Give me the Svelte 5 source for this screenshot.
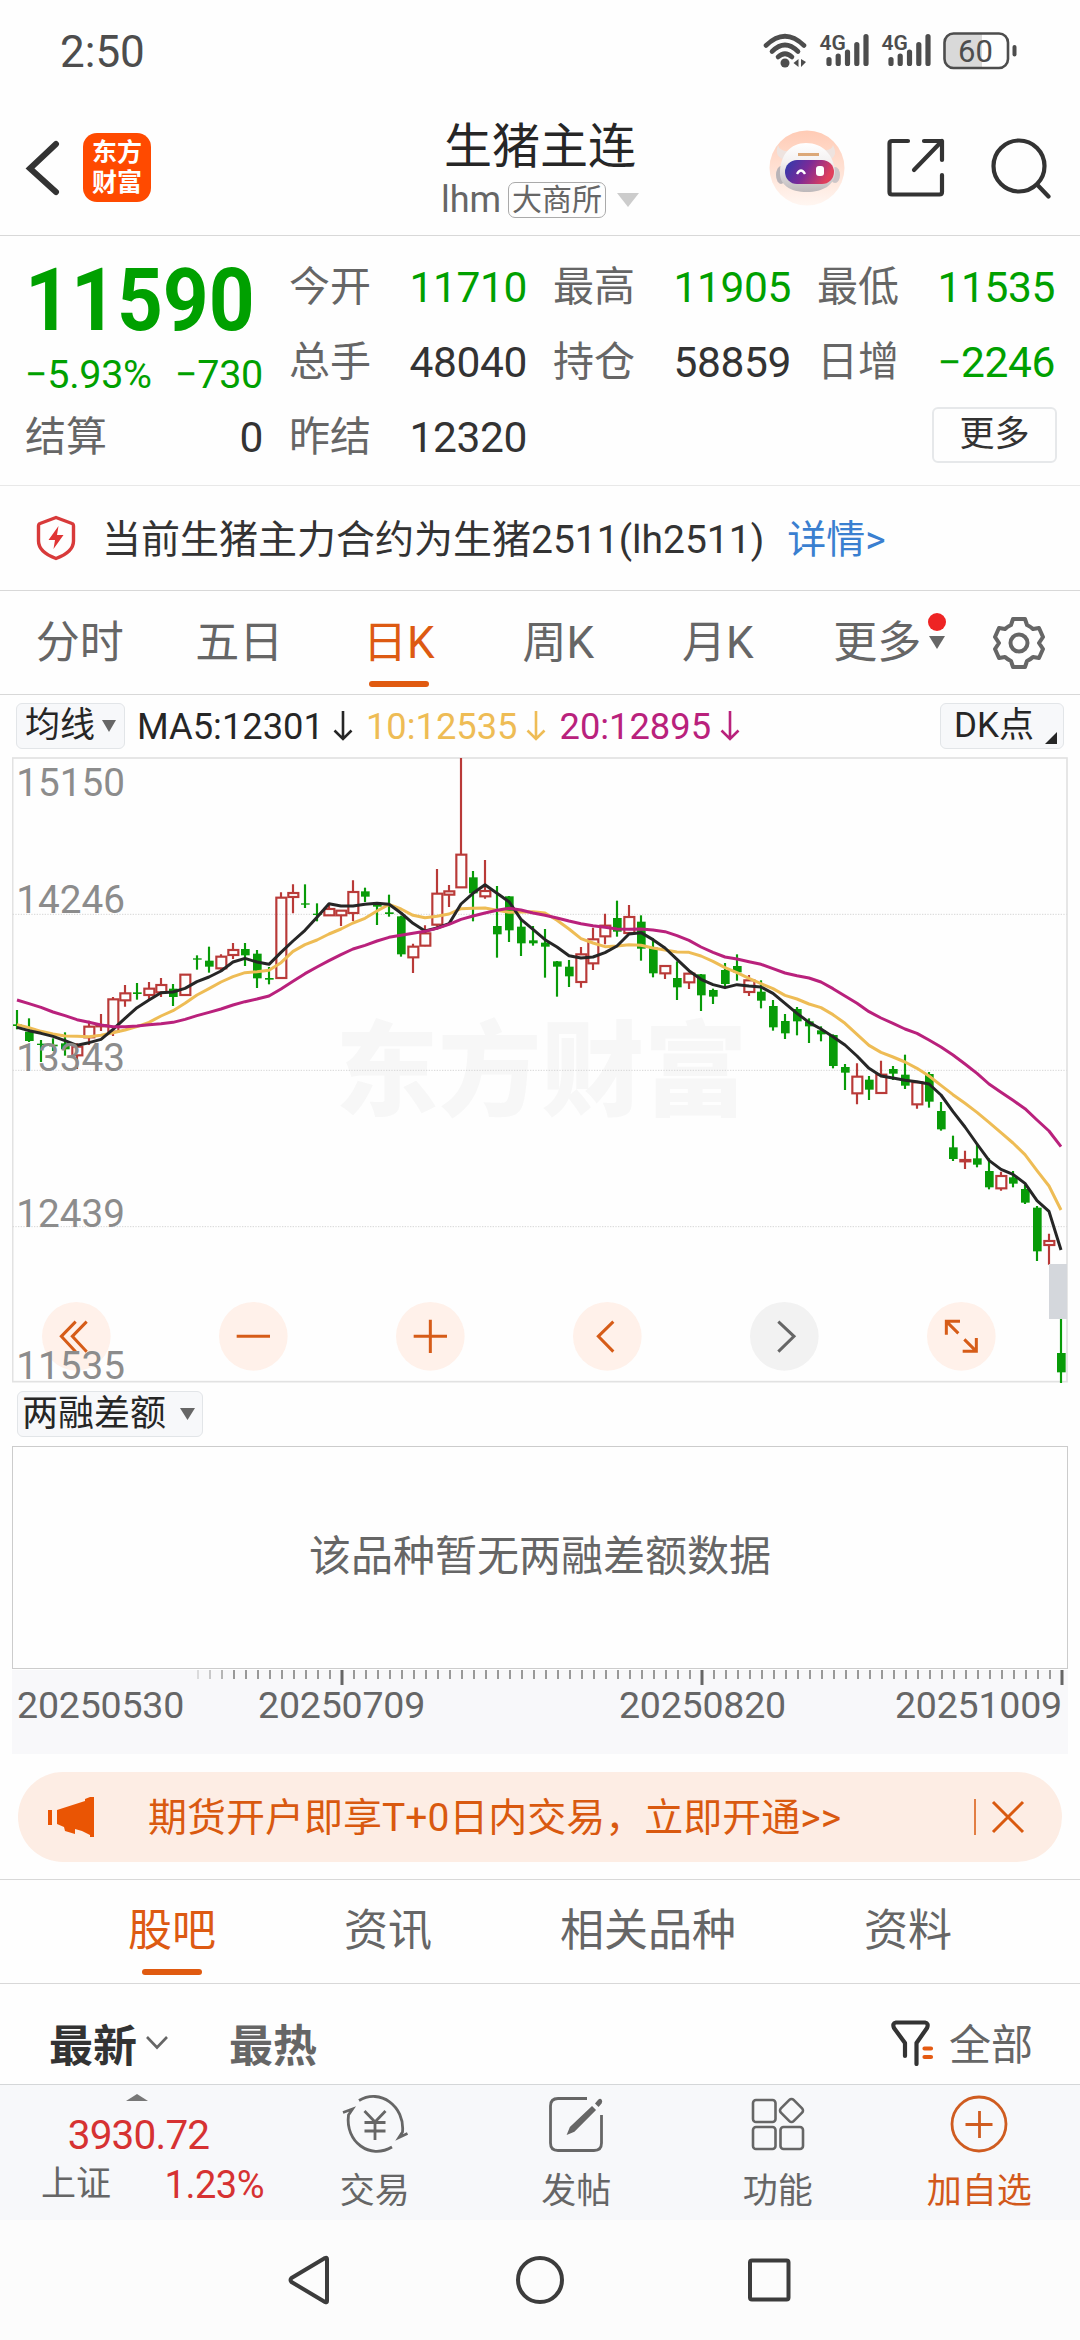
<script lang="ts">
	type Candle = [string, number, number, number, number];

	// chart units: three per css pixel
	const STEP = 36;
	const FIRST_X = 51;

	// direction, high, body top, body bottom, low
	const candles: Candle[] = [
		['d', 780, 823, 828, 838], ['d', 805, 845, 873, 876], ['d', 870, 881, 885, 936], ['d', 865, 884, 889, 903],
		['d', 847, 880, 898, 917], ['u', 880, 890, 916, 957], ['u', 812, 830, 862, 885], ['u', 792, 826, 829, 843],
		['u', 741, 748, 845, 858], ['u', 705, 730, 751, 770], ['d', 699, 727, 732, 749], ['u', 696, 716, 735, 752],
		['u', 684, 705, 727, 741], ['d', 702, 716, 741, 768], ['u', 673, 674, 735, 737], ['d', 616, 625, 629, 659],
		['d', 590, 632, 650, 668], ['u', 613, 620, 655, 660], ['u', 579, 600, 615, 627], ['d', 579, 597, 616, 648],
		['d', 600, 611, 685, 714], ['d', 651, 684, 689, 703], ['u', 427, 443, 684, 686], ['u', 403, 429, 441, 490],
		['d', 403, 460, 464, 474], ['d', 460, 491, 495, 514], ['u', 462, 477, 496, 498], ['u', 480, 482, 496, 528],
		['u', 391, 426, 489, 513], ['d', 413, 424, 440, 456], ['d', 458, 463, 470, 525], ['d', 434, 487, 492, 500],
		['d', 497, 499, 613, 620], ['u', 581, 590, 622, 669], ['u', 526, 550, 587, 589], ['u', 357, 431, 524, 530],
		['u', 405, 424, 434, 471], ['u', 24, 314, 412, 413], ['d', 363, 382, 430, 514], ['u', 330, 423, 439, 446],
		['d', 408, 528, 553, 623], ['d', 438, 439, 541, 576], ['d', 505, 530, 580, 618], ['d', 528, 571, 580, 587],
		['d', 537, 578, 590, 683], ['d', 633, 634, 650, 740], ['d', 630, 650, 679, 711], ['u', 591, 613, 696, 713],
		['u', 533, 568, 640, 660], ['u', 491, 527, 559, 583], ['d', 452, 504, 545, 560], ['u', 465, 501, 549, 551],
		['d', 496, 515, 596, 632], ['d', 565, 592, 670, 682], ['u', 647, 648, 670, 687], ['d', 634, 684, 712, 750],
		['u', 668, 671, 697, 717], ['d', 672, 673, 736, 783], ['d', 716, 720, 740, 762], ['d', 639, 660, 702, 710],
		['d', 613, 648, 667, 692], ['u', 675, 691, 726, 738], ['d', 691, 725, 752, 775], ['d', 750, 768, 832, 842],
		['d', 792, 813, 850, 867], ['d', 771, 777, 814, 856], ['d', 805, 814, 829, 879], ['d', 829, 841, 853, 874],
		['d', 853, 855, 948, 955], ['d', 942, 951, 968, 1020], ['u', 940, 980, 1030, 1063], ['d', 978, 989, 1019, 1050],
		['u', 932, 974, 1029, 1031], ['d', 948, 957, 971, 990], ['d', 914, 974, 1007, 1017], ['u', 994, 997, 1063, 1076],
		['d', 966, 972, 1055, 1073], ['d', 1056, 1083, 1138, 1142], ['d', 1157, 1192, 1227, 1233], ['u', 1202, 1230, 1234, 1257],
		['d', 1180, 1225, 1244, 1252], ['d', 1225, 1263, 1312, 1318], ['u', 1265, 1278, 1315, 1322], ['d', 1263, 1282, 1301, 1312],
		['d', 1305, 1317, 1358, 1362], ['d', 1368, 1373, 1504, 1533], ['u', 1451, 1473, 1485, 1544], ['d', 1707, 1809, 1867, 1899]
	];

	const averages = [
		{
			color: '#eebc55',
			points: [
				824, 833, 844, 852, 858, 859, 860, 856, 848, 840, 830, 817, 798, 782, 760, 735, 716, 696, 680, 668, 665, 661,
				638, 604, 584, 570, 552, 537, 519, 505, 483, 463, 477, 496, 503, 499, 492, 476, 475, 474, 481, 487, 486, 485,
				489, 511, 537, 566, 579, 590, 588, 584, 586, 594, 600, 606, 607, 618, 634, 653, 668, 685, 701, 716, 736, 747,
				762, 773, 794, 820, 853, 886, 907, 921, 936, 955, 978, 1006, 1034, 1060, 1087, 1117, 1148, 1179, 1214, 1262, 1308, 1380
			]
		},
		{
			color: '#262626',
			points: [
				832, 842, 850, 859, 872, 886, 878, 868, 838, 805, 773, 750, 728, 726, 715, 695, 681, 663, 636, 625, 636, 643,
				607, 573, 541, 502, 461, 468, 468, 463, 460, 463, 489, 520, 543, 534, 521, 462, 430, 404, 430, 455, 508, 538,
				569, 591, 617, 624, 621, 608, 588, 552, 548, 569, 594, 628, 662, 688, 704, 713, 704, 708, 711, 730, 760, 790,
				817, 837, 860, 885, 918, 955, 978, 984, 991, 995, 1002, 1035, 1085, 1131, 1182, 1231, 1258, 1273, 1300, 1352, 1384, 1500
			]
		},
		{
			color: '#b9217c',
			points: [
				750, 761, 772, 786, 797, 809, 817, 825, 830, 830, 828, 824, 821, 817, 808, 797, 787, 777, 765, 755, 747, 738,
				717, 694, 671, 651, 632, 614, 597, 586, 573, 562, 556, 550, 544, 535, 523, 508, 498, 489, 481, 475, 480, 489,
				496, 504, 513, 521, 527, 532, 537, 538, 537, 540, 545, 557, 571, 591, 607, 621, 627, 635, 643, 656, 669, 677,
				684, 696, 716, 738, 760, 785, 804, 820, 837, 850, 870, 891, 915, 942, 970, 1002, 1027, 1051, 1076, 1110, 1143, 1190
			]
		}
	];

	const priceLabels = [
		{ text: '15150', y: 137 },
		{ text: '14246', y: 490 },
		{ text: '13343', y: 963 },
		{ text: '12439', y: 1430 },
		{ text: '11535', y: 1887 }
	];

	const controls = [
		'M-2-44L-45 0L-2 46M31-44L-12 0L31 46',
		'M-50 0H50',
		'M-50 0H50M0-50V50',
		'M18-44L-27 0L18 46',
		'M-18-44L29 0L-18 46',
		'M-4-45H-45V-5M-45-45L-9-9M4 45H45V5M45 45L9 9'
	];

	const maLegend = [
		{ text: 'MA5:12301', cls: 'black' },
		{ text: '10:12535', cls: 'yellow' },
		{ text: '20:12895', cls: 'purple' }
	];

	const quotes = [
		{ label: '今开', value: '11710', green: true },
		{ label: '最高', value: '11905', green: true },
		{ label: '最低', value: '11535', green: true },
		{ label: '总手', value: '48040' },
		{ label: '持仓', value: '58859' },
		{ label: '日增', value: '−2246', green: true },
		{ label: '结算', value: '0' },
		{ label: '昨结', value: '12320' }
	];

	const periods = ['分时', '五日', '日K', '周K', '月K'];
	const sections = ['股吧', '资讯', '相关品种', '资料'];
	const ticks = Array.from({ length: 73 }, (_, i) => i);

	let period = $state('日K');
	let section = $state('股吧');

	const x = (i: number) => FIRST_X + i * STEP;

	function linePath(points: number[]): string {
		return points.map((y, i) => `${i ? 'L' : 'M'}${x(i)} ${y}`).join('');
	}
</script>

{#snippet signal(left: number)}
	<text x={left} y="20" class="net">4G</text>
	<path d="M{left + 9.5} 29.5v4M{left + 18.7} 26v7.500M{left + 28} 22v11.500M{left + 37.300} 14.500v19M{left + 46.500} 6.500v27" stroke-width="5.200" stroke-linecap="round" />
{/snippet}

<div class="screen">
	<div class="status">
		<span class="time">2:50</span>
		<svg width="256" height="42" viewBox="0 0 256 42" fill="none" stroke="#4d4d4d">
			<g stroke-width="4.600" stroke-linecap="round">
				<path d="M3 15.500Q22 -3 41 15.500" />
				<path d="M9 21.500Q22 8.500 35 21.500" />
				<path d="M15 27Q22 20.500 29 27" />
			</g>
			<circle cx="22" cy="33" r="4.500" fill="#4d4d4d" stroke="none" />
			<path d="M35.500 29v8l-5-4zM38 29v8l5-5z" fill="#4d4d4d" stroke="none" />
			{@render signal(56.5)}
			{@render signal(118.5)}
			<path d="M191 3.500H219V37.500H191Q181.500 37.500 181.500 29V12Q181.500 3.500 191 3.500Z" fill="#d9d9d9" stroke="none" />
			<rect x="181.500" y="3.500" width="63.500" height="34.500" rx="9" stroke-width="2.600" />
			<path d="M251.500 17v7.500" stroke-width="4" stroke-linecap="round" />
			<text x="212.500" y="32" text-anchor="middle" class="battery">60</text>
		</svg>
	</div>

	<header>
		<div class="side">
			<svg width="36" height="56" viewBox="0 0 36 56" fill="none" stroke="#333" stroke-width="6" stroke-linecap="round">
				<path d="M31 4L5 28.500L31 52" />
			</svg>
			<div class="logo"><span>东方</span><span>财富</span></div>
		</div>
		<div class="title">
			<h1>生猪主连</h1>
			<div class="sub">
				<span>lhm</span>
				<span class="exchange">大商所</span>
				<svg width="22" height="14" viewBox="0 0 22 14"><path d="M0 0H22L11 14Z" fill="#ccc" /></svg>
			</div>
		</div>
		<div class="side right">
			<svg width="76" height="76" viewBox="0 0 76 76">
				<defs>
					<linearGradient id="halo" x1="0" y1="0" x2="0" y2="1">
						<stop offset="0" stop-color="#ffcbb5" />
						<stop offset="1" stop-color="#fff6f1" />
					</linearGradient>
					<linearGradient id="visor" x1="0" y1="0" x2="1" y2="0.300">
						<stop offset="0" stop-color="#2a3cae" />
						<stop offset="0.500" stop-color="#7a2a98" />
						<stop offset="1" stop-color="#e0405c" />
					</linearGradient>
					<linearGradient id="shell" x1="0" y1="0" x2="0" y2="1">
						<stop offset="0" stop-color="#fff" />
						<stop offset="0.400" stop-color="#f3f0f0" />
						<stop offset="1" stop-color="#bdb8ba" />
					</linearGradient>
				</defs>
				<circle cx="38" cy="38" r="37.500" fill="url(#halo)" />
				<path d="M9 15Q5 26 14 29L21 21Q11 22 9 15ZM64 15Q69 25 62 29L54 20Q63 21 64 15Z" fill="#eee3df" />
				<ellipse cx="12" cy="45" rx="5" ry="9" fill="#b9b4b8" />
				<ellipse cx="66" cy="45" rx="5" ry="8" fill="#cdc6c8" />
				<path d="M37 13C54 13 65 25 66 42C66 55 54 62 38 62C21 62 10 55 11 41C12 25 21 13 37 13Z" fill="url(#shell)" />
				<rect x="16" y="30" width="49" height="24" rx="12" fill="url(#visor)" />
				<path d="M29 24.500H50" fill="none" stroke="#dca878" stroke-width="3" />
				<path d="M28 44Q32 37 36 44" fill="none" stroke="#fff" stroke-width="2.400" />
				<rect x="47" y="36" width="8" height="10" rx="3" fill="#fff" />
			</svg>
			<svg width="58" height="60" viewBox="0 0 58 60" fill="none" stroke="#333" stroke-width="4.200" stroke-linecap="round" stroke-linejoin="round">
				<path d="M21 3H5Q2.500 3 2.500 5.500V54Q2.500 56.500 5 56.500H52.500Q55 56.500 55 54V37M37 3H55V22M55 3L27 32" />
			</svg>
			<svg class="search" width="60" height="62" viewBox="0 0 60 62" fill="none" stroke="#333" stroke-width="4.200" stroke-linecap="round">
				<circle cx="28" cy="29" r="25.500" />
				<path d="M46.500 48L57.500 59.500" />
			</svg>
		</div>
	</header>

	<section class="quote">
		<div class="last">
			<div class="price">11590</div>
			<div class="change"><span>−5.93%</span><span>−730</span></div>
		</div>
		{#each quotes as q}
			<div class="cell">
				<span class="label">{q.label}</span>
				<span class="value" class:green={q.green}>{q.value}</span>
			</div>
		{/each}
		<button class="more">更多</button>
	</section>

	<section class="notice">
		<svg width="40" height="46" viewBox="0 0 40 46">
			<path d="M20 2.500L36 8.500Q37.500 9 37.500 11V26Q37.500 37 20 43.500Q2.500 37 2.500 26V11Q2.500 9 4 8.500Z" fill="none" stroke="#d83a3a" stroke-width="3.400" stroke-linejoin="round" />
			<path d="M22.500 11L12.500 25H19L17.500 34L27.500 20H21Z" fill="#e03434" />
		</svg>
		<span>当前生猪主力合约为生猪2511(lh2511)</span>
		<a href="#detail">详情&gt;</a>
	</section>

	<nav class="periods">
		{#each periods as p}
			<button class:active={period === p} onclick={() => (period = p)}>{p}</button>
		{/each}
		<button class="extra">
			更多
			<i class="dot"></i>
			<svg width="16" height="13" viewBox="0 0 16 13"><path d="M0 0H16L8 13Z" fill="#666" /></svg>
		</button>
		<div class="gear">
			<svg width="52" height="54" viewBox="0 0 52 54" fill="none" stroke="#666" stroke-width="4" stroke-linejoin="round">
				<path d="M20 3H32L34 9Q38 11 40 13L46 12L50 21L46 27L50 33L46 42L40 41Q38 43 34 45L32 51H20L18 45Q14 43 12 41L6 42L2 33L6 27L2 21L6 12L12 13Q14 11 18 9Z" />
				<circle cx="26" cy="27" r="8.500" />
			</svg>
		</div>
	</nav>

	<div class="legend">
		<button class="chip">均线<svg width="14" height="12" viewBox="0 0 14 12"><path d="M0 0H14L7 12Z" fill="#666" /></svg></button>
		{#each maLegend as m}
			<span class="ma {m.cls}">
				{m.text}
				<svg width="20" height="30" viewBox="0 0 20 30" fill="none" stroke="currentColor" stroke-width="2.600"><path d="M10 0V28M1.500 19.500L10 28L18.500 19.500" /></svg>
			</span>
		{/each}
		<button class="chip dk">DK点<svg width="12" height="12" viewBox="0 0 12 12"><path d="M12 0V12H0Z" fill="#262626" /></svg></button>
	</div>

	<svg class="chart" width="1056" height="626" viewBox="36 21 3168 1878">
		<text x="1006" y="1073" class="watermark">东方财富</text>
		<rect x="38" y="24" width="3163" height="1871" fill="none" stroke="#e2e2e2" stroke-width="5" />
		{#each [493, 961, 1430] as y}
			<path d="M38 {y}H3200" stroke="#d6d6d6" stroke-width="3" stroke-dasharray="4 4" />
		{/each}
		{#each candles as [dir, high, top, bottom, low], i}
			{#if dir === 'u'}
				<path d="M{x(i)} {high}V{top}M{x(i)} {bottom}V{low}" stroke="#b93a38" stroke-width="6.500" />
				<rect x={x(i) - 14} y={top} width="30" height={bottom - top} fill="none" stroke="#b93a38" stroke-width="6.500" />
			{:else}
				<path d="M{x(i)} {high}V{low}" stroke="#089b08" stroke-width="6.500" />
				<rect x={x(i) - 12} y={top} width="26" height={bottom - top} fill="#089b08" />
			{/if}
		{/each}
		{#each averages as line}
			<path d={linePath(line.points)} fill="none" stroke={line.color} stroke-width="9" stroke-linejoin="round" />
		{/each}
		<rect x="3147" y="1542" width="54" height="165" fill="#d4d7dc" />
		{#each controls as d, i}
			<g transform="translate({229 + i * 531} 1759)">
				<circle r="103" fill={i === 4 ? '#f2f2f2' : '#fff1ea'} />
				<path {d} fill="none" stroke={i === 4 ? '#666' : '#d65c18'} stroke-width="9" />
			</g>
		{/each}
		{#each priceLabels as p}
			<text x="49" y={p.y} class="axis">{p.text}</text>
		{/each}
	</svg>

	<div class="indicator">
		<button class="chip">两融差额<svg width="15" height="12" viewBox="0 0 15 12"><path d="M0 0H15L7.500 12Z" fill="#666" /></svg></button>
	</div>
	<div class="empty">该品种暂无两融差额数据</div>

	<div class="dates">
		<svg width="1056" height="16" viewBox="12 0 1056 16">
			{#each ticks as t}
				<path
					d="M{198 + t * 12} 0V{t % 30 === 12 ? 15 : 9}"
					stroke={t % 30 === 12 ? '#666' : '#999'}
					stroke-width={t % 30 === 12 ? 3 : 2}
					opacity={t < 3 ? 0.3 + t * 0.2 : 1}
				/>
			{/each}
		</svg>
		<div class="row">
			<span>20250530</span>
			<span>20250709</span>
			<span>20250820</span>
			<span>20251009</span>
		</div>
	</div>

	<div class="banner">
		<svg width="46" height="40" viewBox="0 0 46 40">
			<path d="M0 13H4V28H0ZM9 13L37 4V2L42 0H46V40H42V38L34 34L27 32V37L17 34L16 30L9 27Z" fill="#ea5504" />
		</svg>
		<span>期货开户即享T+0日内交易，立即开通&gt;&gt;</span>
		<svg class="close" width="52" height="38" viewBox="0 0 52 38" fill="none" stroke="#d9590f">
			<path d="M1 1V37" stroke-width="1.500" />
			<path d="M19 4L49 34M49 4L19 34" stroke-width="3" />
		</svg>
	</div>

	<nav class="sections">
		{#each sections as s}
			<button class:active={section === s} onclick={() => (section = s)}>{s}</button>
		{/each}
	</nav>

	<div class="sort">
		<b>最新</b>
		<svg width="22" height="14" viewBox="0 0 22 14" fill="none" stroke="#666" stroke-width="2.600"><path d="M1 1L11 11.500L21 1" /></svg>
		<b class="hot">最热</b>
		<div class="filter">
			<svg width="43" height="46" viewBox="0 0 43 46" fill="none" stroke="#333" stroke-width="4.200" stroke-linecap="round" stroke-linejoin="round">
				<path d="M14 36V23L3 8Q1 3 5 2.500H34Q38 3 36 8L25.500 23V44" />
				<path d="M33.500 28.500H40M33.500 37H40" stroke="#e45a12" />
			</svg>
			<span>全部</span>
		</div>
	</div>

	<footer>
		<div class="index">
			<svg width="22" height="7" viewBox="0 0 22 7"><path d="M0 7L11 0L22 7Z" fill="#777" /></svg>
			<span class="points">3930.72</span>
			<div><span class="name">上证</span><span class="pct">1.23%</span></div>
		</div>
		<div class="item">
			<svg width="66" height="60" viewBox="0 0 66 60" fill="none" stroke="#666" stroke-width="2.800">
				<path d="M17 6.500C38 -6 63 12 60.500 38L57 43.500L65.500 39.500" />
				<path d="M50 53C28 66 3 48 6.500 21L10.500 15L1 18.500" />
				<path d="M22.500 17L33 28L43.500 17M33 28V46M22.500 28.500H43.500M22.500 37H43.500" />
			</svg>
			<span>交易</span>
		</div>
		<div class="item">
			<svg width="56" height="60" viewBox="0 0 56 60" fill="none" stroke="#666" stroke-width="2.800">
				<path d="M39 4.500H10Q2.500 4.500 2.500 12V49Q2.500 56.500 10 56.500H46Q53.500 56.500 53.500 49V21" />
				<path d="M44 13L47 16L26 37L20 39.500L22.500 33.500ZM48 9.500L50.500 6.500Q52 5 53 6T53 9L50.500 12Z" fill="#666" stroke-width="1.500" />
			</svg>
			<span>发帖</span>
		</div>
		<div class="item">
			<svg width="54" height="60" viewBox="0 0 54 60" fill="none" stroke="#666" stroke-width="2.600">
				<rect x="2" y="6" width="22.500" height="22" rx="3" />
				<rect x="2" y="33" width="22.500" height="22" rx="3" />
				<rect x="29.500" y="33" width="22.500" height="22" rx="3" />
				<rect x="31.500" y="7.500" width="18" height="18" rx="3" transform="rotate(45 40.500 16.500)" />
			</svg>
			<span>功能</span>
		</div>
		<div class="item add">
			<svg width="58" height="60" viewBox="0 0 58 60" fill="none" stroke="#cf5c20" stroke-width="2.800">
				<circle cx="29" cy="30" r="27" />
				<path d="M15.500 30.500H42.500M29.500 17V44" />
			</svg>
			<span>加自选</span>
		</div>
	</footer>

	<div class="system">
		<svg width="504" height="50" viewBox="288 0 504 50" fill="none" stroke="#3c3c3c" stroke-width="4" stroke-linejoin="round">
			<path d="M327 4V46Q327 48 325 47L291.500 27Q289.500 25 291.500 23L325 3Q327 2 327 4Z" />
			<circle cx="540" cy="25" r="22" />
			<rect x="750" y="5.500" width="38.500" height="39" rx="2" />
		</svg>
	</div>
</div>

<style>
	:global(body) {
		background: #fefefe;
	}

	.screen {
		width: 1080px;
		height: 2340px;
		overflow: hidden;
		display: flex;
		flex-direction: column;
		background: #fefefe;
		color: #333;
		font-family: Roboto, 'Noto Sans CJK SC', sans-serif;
	}

	.screen > * {
		flex: none;
		box-sizing: border-box;
	}

	svg {
		display: block;
		flex: none;
	}

	button {
		padding: 0;
		border: 0;
		background: none;
		color: inherit;
		font: inherit;
	}

	.status {
		height: 100px;
		padding: 2px 61px 0 60px;
		display: flex;
		justify-content: space-between;
		align-items: center;
	}

	.time {
		font-size: 44px;
		line-height: 50px;
		color: #4d4d4d;
		margin-top: 2px;
	}

	.net {
		font-size: 21px;
		font-weight: 600;
		fill: #4d4d4d;
		stroke: none;
	}

	.battery {
		font-size: 31px;
		fill: #4d4d4d;
		stroke: none;
	}

	header {
		height: 136px;
		display: flex;
		align-items: center;
		justify-content: space-between;
		border-bottom: 1.5px solid #d8d8d8;
	}

	.side {
		width: 320px;
		box-sizing: border-box;
		display: flex;
		align-items: center;
		padding-left: 25px;
		gap: 22px;
	}

	.right {
		padding: 0 29px 0 0;
		gap: 42px;
		justify-content: flex-end;
	}

	.search {
		margin-left: 4px;
	}

	.logo {
		width: 68px;
		height: 69px;
		border-radius: 14px;
		background: #ff4a00;
		color: #fff;
		font-size: 25px;
		font-weight: 700;
		line-height: 30px;
		display: flex;
		flex-direction: column;
		align-items: center;
		justify-content: center;
	}

	.title {
		display: flex;
		flex-direction: column;
		align-items: center;
	}

	h1 {
		margin: 0;
		font-size: 48px;
		font-weight: 400;
		line-height: 64px;
		color: #262626;
	}

	.sub {
		display: flex;
		align-items: center;
		gap: 7px;
		font-size: 36px;
		line-height: 40px;
		color: #666;
		margin-top: 1px;
	}

	.exchange {
		border: 1.5px solid #aaa;
		border-radius: 7px;
		padding: 0 3px;
		font-size: 30px;
		line-height: 34px;
		margin-right: 4px;
	}

	.quote {
		height: 250px;
		padding: 14px 25px 0;
		display: grid;
		grid-template-columns: repeat(4, 238px);
		grid-template-rows: repeat(3, 75px);
		column-gap: 26px;
		border-bottom: 1.5px solid #e8e8e8;
		font-size: 42px;
	}

	.last {
		grid-row: span 2;
		color: #00a000;
	}

	.price {
		font-size: 88px;
		font-weight: 700;
		line-height: 100px;
		transform: scaleX(0.91);
		transform-origin: 0 50%;
		white-space: nowrap;
	}

	.change {
		display: flex;
		justify-content: space-between;
		font-size: 39.500px;
		letter-spacing: -0.300px;
		line-height: 50px;
	}

	.cell {
		display: flex;
		justify-content: space-between;
		line-height: 75px;
	}

	.label {
		color: #666;
		font-size: 41px;
	}

	.value {
		font-size: 42.500px;
		letter-spacing: -0.400px;
	}

	.green {
		color: #00a000;
	}

	.more {
		grid-column: 4;
		justify-self: end;
		align-self: center;
		width: 125px;
		height: 56px;
		margin: -6px -2px 0 0;
		border: 2px solid #e6e8ea;
		border-radius: 6px;
		font-size: 35px;
		line-height: 48px;
	}

	.notice {
		height: 105px;
		padding: 0 0 4px 36px;
		display: flex;
		align-items: center;
		font-size: 39px;
		border-bottom: 1.5px solid #d8d8d8;
	}

	.notice svg {
		margin-top: 4px;
	}

	.notice span {
		margin: 0 23px 0 26px;
	}

	a {
		color: #3a7fd0;
		text-decoration: none;
	}

	.periods {
		height: 104px;
		display: grid;
		grid-template-columns: repeat(6, 159.500px) 1fr;
		font-size: 44px;
		color: #666;
		border-bottom: 1.5px solid #d8d8d8;
	}

	.periods button {
		position: relative;
		line-height: 104px;
	}

	.active {
		color: #dd5a12;
	}

	.active::after {
		content: '';
		position: absolute;
		left: calc(50% - 30px);
		bottom: 8px;
		width: 60px;
		height: 6px;
		border-radius: 3px;
		background: #e05a10;
	}

	.dot {
		position: absolute;
		left: 130px;
		top: 22px;
		width: 18px;
		height: 18px;
		border-radius: 50%;
		background: #ee2424;
	}

	.extra svg {
		position: absolute;
		left: 131px;
		top: 45px;
	}

	.gear {
		display: flex;
		align-items: center;
		justify-content: center;
	}

	.legend {
		height: 62px;
		padding: 0 16px;
		display: flex;
		align-items: center;
		font-size: 36.300px;
	}

	.chip {
		height: 46px;
		display: flex;
		align-items: center;
		gap: 7px;
		padding: 0 8px;
		border: 1.5px solid #e2e5e8;
		border-radius: 6px;
		background: #f7f8fa;
		color: #262626;
		font-size: 35px;
		line-height: 42px;
	}

	.ma {
		display: flex;
		align-items: center;
		gap: 9px;
		margin-left: 13px;
	}

	.chip + .ma {
		margin-left: 12px;
	}

	.black {
		color: #262626;
	}

	.yellow {
		color: #eebc55;
	}

	.purple {
		color: #b9217c;
	}

	.dk {
		margin-left: auto;
		padding: 0 6px 0 13px;
		gap: 11px;
	}

	.dk svg {
		margin-top: 24px;
	}

	.chart {
		margin-left: 12px;
	}

	.watermark {
		font-size: 309px;
		font-weight: 900;
		fill: #f7f7f7;
	}

	.axis {
		font-size: 116px;
		fill: #8c8c8c;
	}

	.indicator {
		height: 63px;
		padding: 8px 17px;
		display: flex;
	}

	.indicator .chip {
		padding: 0 7px 0 4px;
		gap: 14px;
		font-size: 36px;
	}

	.empty {
		height: 223px;
		margin: 0 12px;
		border: 1.5px solid #ccc;
		text-align: center;
		font-size: 42px;
		line-height: 220px;
		color: #666;
	}

	.dates {
		height: 84px;
		margin: 1px 12px 0;
		background: #f8f8fa;
		font-size: 37.500px;
		letter-spacing: -0.200px;
		color: #666;
	}

	.row {
		display: flex;
		padding: 0 6px 0 5px;
		line-height: 38px;
	}

	.row span:nth-child(2) {
		margin-left: 74px;
	}

	.row span:nth-child(3) {
		margin-left: auto;
	}

	.row span:nth-child(4) {
		margin-left: 109px;
	}

	.banner {
		height: 90px;
		margin: 18px 18px 17px;
		padding: 0 36px 0 30px;
		display: flex;
		align-items: center;
		gap: 54px;
		border-radius: 45px;
		background: #fdede4;
		color: #d9590f;
		font-size: 39px;
	}

	.banner span {
		padding-bottom: 7px;
	}

	.close {
		margin-left: auto;
	}

	.sections {
		height: 105px;
		display: flex;
		justify-content: space-evenly;
		border-top: 1.5px solid #d8d8d8;
		border-bottom: 1.5px solid #d8d8d8;
		font-size: 44px;
		color: #666;
	}

	.sections button {
		position: relative;
		line-height: 103px;
	}

	.sections .active {
		color: #dd5a12;
	}

	.sort {
		height: 101px;
		padding: 18px 47px 0 49px;
		display: flex;
		align-items: center;
		border-bottom: 1.5px solid #d4d6d8;
		font-size: 44px;
	}

	.sort > svg {
		margin: 0 61px 0 9px;
	}

	.sort b {
		font-weight: 600;
	}

	.hot {
		color: #666;
	}

	.filter {
		margin-left: auto;
		display: flex;
		align-items: center;
		gap: 15px;
		font-size: 42px;
		color: #666;
	}

	.filter span {
		margin-top: -3px;
	}

	footer {
		height: 135px;
		display: grid;
		grid-template-columns: 274px repeat(4, 201.500px);
		background: #f7f8fa;
		color: #666;
		font-size: 35px;
	}

	.index {
		display: flex;
		flex-direction: column;
		align-items: center;
		padding-top: 9px;
	}

	.points {
		margin-top: 10px;
		padding-left: 3px;
		font-size: 40.500px;
		letter-spacing: -0.800px;
		line-height: 49px;
		color: #d63232;
	}

	.index div {
		align-self: stretch;
		display: flex;
		justify-content: space-between;
		padding: 0 10px 0 41px;
		line-height: 50px;
	}

	.pct {
		font-size: 38px;
		letter-spacing: -0.500px;
		color: #d63232;
	}

	.item {
		display: flex;
		flex-direction: column;
		align-items: center;
		padding-top: 9px;
		line-height: 50px;
	}

	.item span {
		margin-top: 13px;
	}

	.add {
		color: #d2591b;
	}

	.system {
		height: 120px;
		padding-top: 35px;
		display: flex;
		justify-content: center;
		background: #fcfcfc;
	}
</style>
